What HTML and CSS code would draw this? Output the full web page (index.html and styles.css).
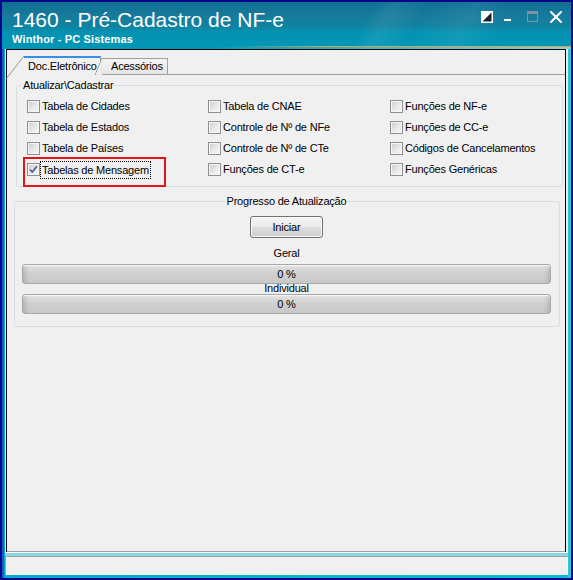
FILE: index.html
```html
<!DOCTYPE html>
<html lang="pt-BR">
<head>
<meta charset="utf-8">
<title>1460 - Pré-Cadastro de NF-e</title>
<link rel="stylesheet" href="styles.css">
</head>
<body>
<div class="window">
  <header class="titlebar">
    <div class="title-text">
      <div class="title">1460 - Pré-Cadastro de NF-e</div>
      <div class="subtitle">Winthor - PC Sistemas</div>
    </div>
    <div class="caption">
      <svg class="cap" width="12" height="12" viewBox="0 0 12 12">
        <rect x="0" y="0" width="12" height="12" fill="#fff"/>
        <path d="M10.5 1.5 L10.5 10.5 L1.5 10.5 Z" fill="#14232e"/>
      </svg>
      <svg class="cap" width="12" height="12" viewBox="0 0 12 12">
        <rect x="0" y="8" width="7" height="2" fill="#fff"/>
      </svg>
      <svg class="cap" width="12" height="12" viewBox="0 0 12 12">
        <rect x="0.5" y="0.5" width="10" height="10" fill="none" stroke="#80929a" stroke-width="1"/>
        <rect x="0" y="0" width="11" height="3" fill="#80929a"/>
      </svg>
      <svg class="cap" width="12" height="12" viewBox="0 0 12 12">
        <path d="M1 1 L11 11 M11 1 L1 11" stroke="#fff" stroke-width="2" stroke-linecap="square"/>
      </svg>
    </div>
  </header>

  <div class="frame-body">
    <main class="client">
      <div class="tabs">
        <div class="tab tab-active">Doc.Eletrônico</div>
        <div class="tab tab-idle">Acessórios</div>
      </div>

      <div class="tab-page">
        <fieldset class="group group-update">
          <legend>Atualizar\Cadastrar</legend>
          <div class="check-grid">
            <div class="check"><span class="box"></span><span class="text">Tabela de Cidades</span></div>
            <div class="check"><span class="box"></span><span class="text">Tabela de CNAE</span></div>
            <div class="check"><span class="box"></span><span class="text">Funções de NF-e</span></div>

            <div class="check"><span class="box"></span><span class="text">Tabela de Estados</span></div>
            <div class="check"><span class="box"></span><span class="text">Controle de Nº de NFe</span></div>
            <div class="check"><span class="box"></span><span class="text">Funções de CC-e</span></div>

            <div class="check"><span class="box"></span><span class="text">Tabela de Países</span></div>
            <div class="check"><span class="box"></span><span class="text">Controle de Nº de CTe</span></div>
            <div class="check"><span class="box"></span><span class="text">Códigos de Cancelamentos</span></div>

            <div class="check check-marked">
              <span class="box">
                <svg width="11" height="11" viewBox="0 0 11 11"><path d="M2 5.5 L4.3 8 L9 2.2" fill="none" stroke="#4a5e8c" stroke-width="1.7"/></svg>
              </span>
              <span class="text focused">Tabelas de Mensagem</span>
            </div>
            <div class="check"><span class="box"></span><span class="text">Funções de CT-e</span></div>
            <div class="check"><span class="box"></span><span class="text">Funções Genéricas</span></div>
          </div>
        </fieldset>

        <fieldset class="group group-progress">
          <legend>Progresso de Atualização</legend>
          <button class="btn" type="button">Iniciar</button>
          <div class="bar-label bar-label-first">Geral</div>
          <div class="progress">0 %</div>
          <div class="bar-label">Individual</div>
          <div class="progress">0 %</div>
        </fieldset>
      </div>
    </main>

    <footer class="statusbar"></footer>
  </div>
</div>
</body>
</html>
```

FILE: styles.css
```css
* {
  box-sizing: border-box;
}

html,
body {
  margin: 0;
  padding: 0;
}

body {
  width: 573px;
  height: 580px;
  overflow: hidden;
  background: #00008a;
  font-family: "Liberation Sans", Arial, sans-serif;
  font-size: 11px;
  letter-spacing: -0.2px;
  color: #000;
}

/* ---------- window frame ---------- */

.window {
  width: 573px;
  height: 580px;
  border: 2px solid #03058c;
  display: flex;
  flex-direction: column;
  background: #00b2cc;
}

.titlebar {
  flex: none;
  height: 47px;
  display: flex;
  justify-content: space-between;
  padding: 6px 9px 0 10px;
  color: #fff;
  background:
    linear-gradient(to right, rgba(214, 168, 70, 0) 225px, #cfa44e 320px, #d4a850 100%) 0 44px / 100% 1px no-repeat,
    linear-gradient(to right, rgba(140, 215, 228, 0) 200px, #86d2de 100%) 0 45px / 100% 2px no-repeat,
    linear-gradient(118deg, transparent 63%, rgba(255, 255, 255, 0.07) 66%, transparent 72%, rgba(255, 255, 255, 0.06) 80%, transparent 86%),
    linear-gradient(to bottom, #0f6f92 0px, #177b9d 14px, #11829f 24px, #0592b2 30px, #0097b6 47px);
}

.title-text {
  display: flex;
  flex-direction: column;
}

.title {
  font-size: 21px;
  line-height: 24px;
  letter-spacing: 0;
  white-space: nowrap;
}

.subtitle {
  margin-top: 1px;
  font-size: 11px;
  line-height: 13px;
  font-weight: bold;
  letter-spacing: 0.15px;
  white-space: nowrap;
}

.caption {
  display: flex;
  gap: 11px;
  margin-top: 3px;
  align-self: flex-start;
}

.cap {
  display: block;
}

.frame-body {
  flex: 1;
  display: flex;
  flex-direction: column;
  padding: 0 3px 3px 3px;
  background: linear-gradient(to right, #1460c8 0, #1460c8 2px, #00a8d0 2px, #00b4cc 50%, #00bcd4 calc(100% - 3px), #2ac6dc calc(100% - 3px));
}

/* ---------- main panel ---------- */

.client {
  flex: 1;
  display: flex;
  flex-direction: column;
  padding-top: 7px;
  background: #f0f0f0;
  border-style: solid;
  border-width: 0 2px 1px 1px;
  border-color: #fff #ebebeb #fff #fff;
  box-shadow: inset 1px 1px 0 #000, inset -1px 0 0 #000, inset 0 -1px 0 #a0a0a0;
}

/* ---------- tabs ---------- */

.tabs {
  display: flex;
  align-items: flex-end;
  height: 19px;
  padding-left: 18px;
  padding-right: 1px;
}

.tabs::after {
  content: "";
  flex: 1;
  align-self: stretch;
  border-bottom: 1px solid #a0a0a0;
}

.tab {
  position: relative;
  white-space: nowrap;
}

.tab-active {
  width: 77px;
  height: 19px;
  padding-left: 4px;
  line-height: 16px;
  border-top: 2px solid #3a8ee6;
  border-right: 1px solid #a0a0a0;
  background: #f0f0f0;
}

.tab-active::before {
  content: "";
  position: absolute;
  left: -18px;
  top: -2px;
  width: 18px;
  height: 23px;
  background: linear-gradient(to bottom right, transparent calc(50% - 0.7px), #8c8c8c 50%, transparent calc(50% + 0.7px));
}

.tab-idle {
  width: 66px;
  height: 17px;
  margin-left: 1px;
  padding-left: 9px;
  line-height: 15px;
  border-top: 1px solid #a0a0a0;
  border-right: 1px solid #a0a0a0;
  border-bottom: 1px solid #a0a0a0;
  background: linear-gradient(to bottom, #f4f4f4, #e6e6e6);
}

.tab-idle::before {
  content: "";
  position: absolute;
  left: -7px;
  top: -1px;
  width: 7px;
  height: 17px;
  background: linear-gradient(to bottom right, transparent calc(50% - 0.6px), #8c8c8c 50%, #ececec calc(50% + 0.6px));
}

/* ---------- group boxes ---------- */

.tab-page {
  display: flex;
  flex-direction: column;
}

.group {
  margin: 0;
  min-width: 0;
  border: 1px solid #d5dfe5;
  border-radius: 3px;
}

.group legend {
  padding: 0 1px;
  line-height: 13px;
  white-space: nowrap;
}

.group-update {
  margin: 4px 3px 0 10px;
  padding: 4px 0 6px 5px;
}

.check-grid {
  margin-left: 5px;
  display: grid;
  grid-template-columns: 181px 182px auto;
  grid-auto-rows: 21px;
}

.check {
  display: flex;
  align-items: center;
  white-space: nowrap;
}

.box {
  flex: none;
  width: 13px;
  height: 13px;
  border: 1px solid #8e8f8f;
  background: linear-gradient(135deg, #c9ccd1 0%, #e8e9ea 55%, #f9f9f9 100%);
  box-shadow: inset 0 0 0 1px #f6f6f6;
  display: flex;
}

.box svg {
  display: block;
}

.text {
  margin-left: 1px;
  padding: 0 1px;
  line-height: 15px;
}

.focused {
  outline: 1px dotted #000;
  outline-offset: 0;
  line-height: 16px;
}

.check-marked {
  position: relative;
}

/* red callout drawn around the selected option */
.check-marked::after {
  content: "";
  position: absolute;
  left: -4px;
  top: -2px;
  width: 139px;
  height: 26px;
  border: 2px solid #e3141b;
}

.group-progress {
  margin: 8px 6px 0 8px;
  padding: 8px 8px 12px 7px;
}

.group-progress legend {
  margin: 0 auto;
  padding: 0 2px;
}

.btn {
  display: block;
  margin: 0 auto;
  width: 73px;
  height: 22px;
  padding: 0;
  font: inherit;
  letter-spacing: -0.2px;
  color: #000;
  border: 1px solid #707070;
  border-radius: 3px;
  background: linear-gradient(to bottom, #f2f2f2 0%, #ebebeb 48%, #dddddd 52%, #cfcfcf 100%);
  box-shadow: inset 0 0 0 1px #fbfbfb;
}

.bar-label {
  text-align: center;
  line-height: 12px;
  height: 12px;
  margin-top: -2px;
}

.bar-label-first {
  margin-top: 9px;
  margin-bottom: 5px;
}

.progress {
  height: 20px;
  line-height: 18px;
  text-align: center;
  border: 1px solid #a8a8a8;
  border-radius: 3px;
  background:
    linear-gradient(to right, rgba(0, 0, 0, 0.12), rgba(0, 0, 0, 0) 6px, rgba(0, 0, 0, 0) calc(100% - 6px), rgba(0, 0, 0, 0.1)),
    linear-gradient(to bottom, #eeeeee 0, #dedede 2px, #d0d0d0 45%, #c8c8c8 100%);
  box-shadow: inset 0 1px 0 #f6f6f6;
}

/* ---------- status bar ---------- */

.statusbar {
  flex: none;
  height: 22px;
  border-top: 3px solid #86d8e6;
  background: #f0f0f0;
  box-shadow: inset 1px 1px 0 #a0a0a0, inset -1px -1px 0 #fff;
}
```
